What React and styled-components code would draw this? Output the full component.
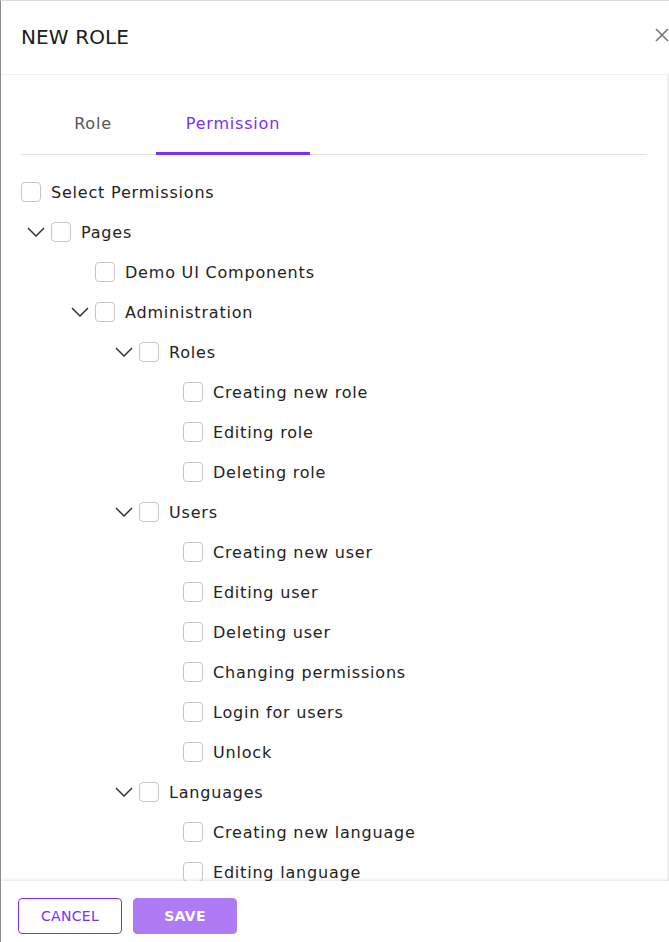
import React from 'react'
import styled, { createGlobalStyle } from 'styled-components'

const GlobalStyle = createGlobalStyle`
  html, body {
    margin: 0;
    padding: 0;
    background: #fff;
  }
  body {
    font-family: 'DejaVu Sans', 'Noto Sans', sans-serif;
    color: #222;
  }
`

const Modal = styled.div`
  width: 669px;
  height: 942px;
  box-sizing: border-box;
  border-left: 1px solid #8c8c8c;
  border-top: 1px solid #dcdcdc;
  display: flex;
  flex-direction: column;
  overflow: hidden;
  background: #fff;
`

const Header = styled.div`
  height: 73px;
  flex-shrink: 0;
  display: flex;
  align-items: center;
  justify-content: space-between;
  padding-left: 20px;
  border-bottom: 1px solid #f0f0f0;
`

const Title = styled.h2`
  margin: 0 0 2px;
  font-size: 20px;
  font-weight: 500;
  color: #1c1c1c;
  letter-spacing: 0.1px;
`

const CloseButton = styled.button`
  border: 0;
  background: none;
  padding: 0;
  width: 14px;
  height: 14px;
  display: flex;
  cursor: pointer;
  margin-bottom: 6px;
`

const Body = styled.div`
  flex: 1;
  min-height: 0;
  overflow: hidden;
  padding: 28px 20px 0 20px;
  border-right: 2px solid #efefef;
`

const Tabs = styled.div`
  display: flex;
  padding-left: 9px;
  border-bottom: 1px solid #e2e2e2;
`

const Tab = styled.div`
  width: ${p => p.width}px;
  height: 52px;
  box-sizing: border-box;
  padding-bottom: 12px;
  display: flex;
  align-items: center;
  justify-content: center;
  font-size: 16px;
  letter-spacing: 0.8px;
  color: ${p => (p.active ? '#7b2ff7' : '#555')};
  box-shadow: ${p => (p.active ? 'inset 0 -3px 0 #7b2ff7' : 'none')};
  margin-bottom: -1px;
`

const Tree = styled.div`
  padding-top: 17px;
`

const Row = styled.div`
  height: 40px;
  display: flex;
  align-items: center;
  padding-left: ${p => p.indent}px;
  font-size: 16px;
  letter-spacing: 0.8px;
  color: #222;
  white-space: nowrap;
`

const ChevronSlot = styled.span`
  width: 24px;
  flex-shrink: 0;
  display: flex;
  align-items: center;
`

const Box = styled.span`
  width: 20px;
  height: 20px;
  box-sizing: border-box;
  border: 1px solid #c6c6c6;
  border-radius: 4px;
  flex-shrink: 0;
  margin-right: 10px;
`

const Footer = styled.div`
  height: 61px;
  flex-shrink: 0;
  box-sizing: border-box;
  display: flex;
  align-items: flex-start;
  gap: 11px;
  padding: 17px 0 0 17px;
  box-shadow: 0 -1px 3px rgba(0, 0, 0, 0.12);
  position: relative;
`

const Button = styled.button`
  width: 104px;
  height: 36px;
  border-radius: 4px;
  font-family: inherit;
  font-size: 14px;
  letter-spacing: 0.3px;
  text-transform: uppercase;
  border: 1px solid ${p => (p.primary ? '#af7bf5' : '#7b2ff7')};
  background: ${p => (p.primary ? '#af7bf5' : '#fff')};
  color: ${p => (p.primary ? '#fff' : '#7b2ff7')};
  font-weight: ${p => (p.primary ? 600 : 400)};
  cursor: pointer;
`

const Chevron = () => (
  <svg width="18" height="10" viewBox="0 0 18 10" fill="none">
    <path d="M1 1l8 8 8-8" stroke="#333" strokeWidth="1.5" />
  </svg>
)

const tree = [
  { label: 'Pages', children: [
    { label: 'Demo UI Components' },
    { label: 'Administration', children: [
      { label: 'Roles', children: [
        { label: 'Creating new role' },
        { label: 'Editing role' },
        { label: 'Deleting role' },
      ] },
      { label: 'Users', children: [
        { label: 'Creating new user' },
        { label: 'Editing user' },
        { label: 'Deleting user' },
        { label: 'Changing permissions' },
        { label: 'Login for users' },
        { label: 'Unlock' },
      ] },
      { label: 'Languages', children: [
        { label: 'Creating new language' },
        { label: 'Editing language' },
        { label: 'Deleting language' },
        { label: 'Changing texts' },
      ] },
    ] },
  ] },
]

const renderNodes = (nodes, level) =>
  nodes.map(n => (
    <React.Fragment key={n.label}>
      <Row indent={6 + (level - 1) * 44}>
        <ChevronSlot>{n.children && <Chevron />}</ChevronSlot>
        <Box />
        {n.label}
      </Row>
      {n.children && renderNodes(n.children, level + 1)}
    </React.Fragment>
  ))

export default function App() {
  return (
    <>
      <GlobalStyle />
      <Modal>
        <Header>
          <Title>NEW ROLE</Title>
          <CloseButton aria-label="close">
            <svg width="14" height="14" viewBox="0 0 14 14">
              <path d="M1 1l12 12M13 1L1 13" stroke="#777" strokeWidth="1.6" />
            </svg>
          </CloseButton>
        </Header>
        <Body>
          <Tabs>
            <Tab width={126}>Role</Tab>
            <Tab width={154} active>Permission</Tab>
          </Tabs>
          <Tree>
            <Row indent={0}>
              <Box />
              Select Permissions
            </Row>
            {renderNodes(tree, 1)}
          </Tree>
        </Body>
        <Footer>
          <Button>Cancel</Button>
          <Button primary>Save</Button>
        </Footer>
      </Modal>
    </>
  )
}
